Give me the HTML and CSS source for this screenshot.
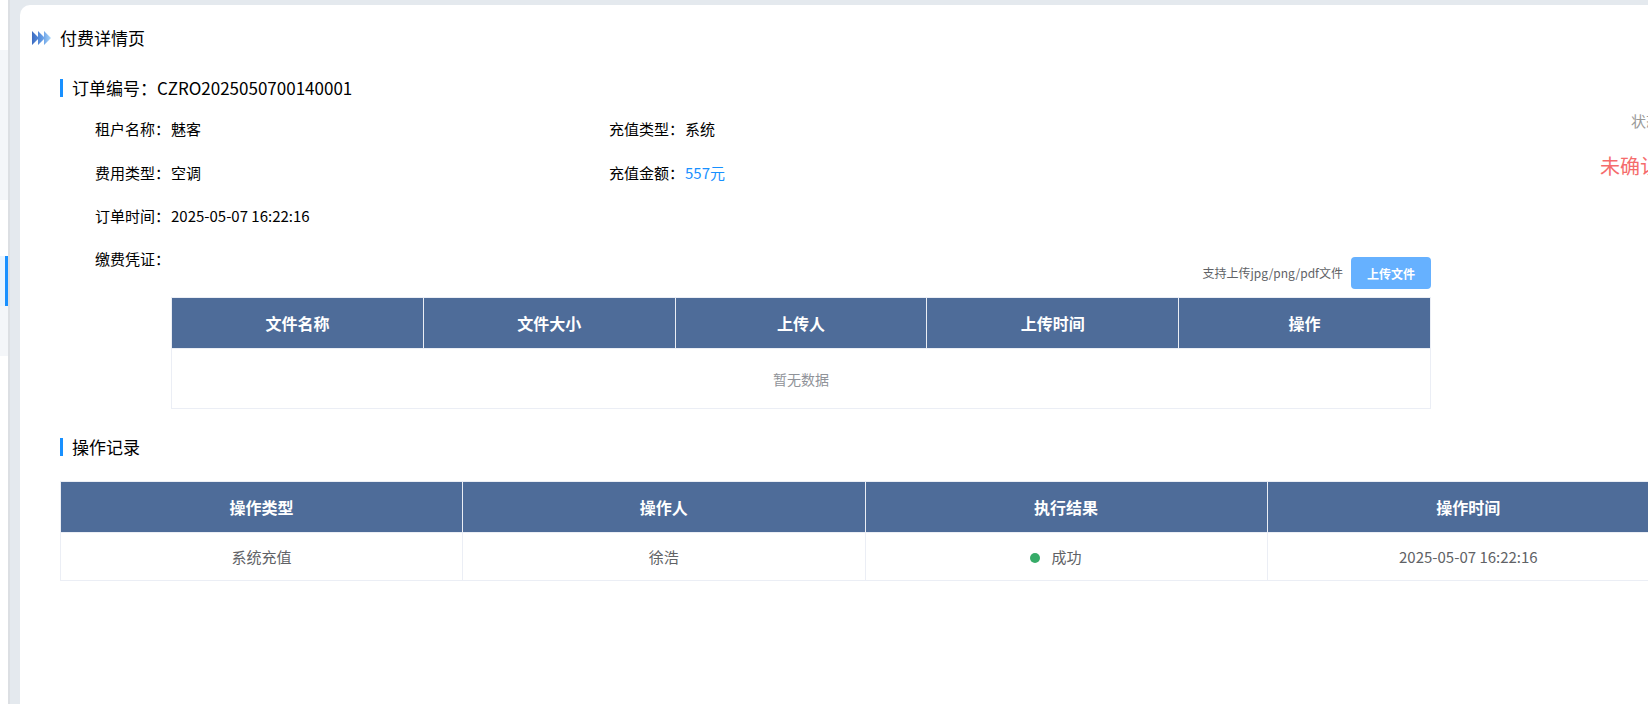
FILE: index.html
```html
<!DOCTYPE html>
<html lang="zh-CN">
<head>
<meta charset="utf-8">
<title>付费详情页</title>
<link rel="stylesheet" href="styles.css">
</head>
<body>
<div class="app">
  <aside class="sidebar">
    <div class="side-a"></div>
    <div class="side-b"></div>
    <div class="side-c"></div>
    <div class="side-active"></div>
    <div class="side-d"></div>
    <div class="side-e"></div>
  </aside>
  <main class="card">
    <header class="page-head">
      <svg class="chev" width="19" height="14" viewBox="0 0 19 14">
        <defs><linearGradient id="g" gradientUnits="userSpaceOnUse" x1="0" x2="19" y1="0" y2="0"><stop offset="0" stop-color="#3c6cc2"/><stop offset="0.5" stop-color="#5f97e2"/><stop offset="1" stop-color="#aad6fa"/></linearGradient></defs>
        <path fill="url(#g)" d="M0 0l7 7-7 7zM6 0l7 7-7 7zM12 0l7 7-7 7z"/>
      </svg>
      <h1 class="page-title">付费详情页</h1>
    </header>
    <section class="detail">
      <div class="detail-main">
        <h2 class="sec-title">订单编号：CZRO2025050700140001</h2>
        <div class="fields">
          <div class="field"><span class="key">租户名称：</span><span>魅客</span></div>
          <div class="field"><span class="key">充值类型：</span><span>系统</span></div>
          <div class="field"><span class="key">费用类型：</span><span>空调</span></div>
          <div class="field"><span class="key">充值金额：</span><span class="money">557元</span></div>
          <div class="field"><span class="key">订单时间：</span><span>2025-05-07 16:22:16</span></div>
        </div>
        <div class="proof">
          <span class="key">缴费凭证：</span>
          <div class="proof-body">
            <div class="upload-row">
              <span class="hint">支持上传jpg/png/pdf文件</span>
              <button class="upload">上传文件</button>
            </div>
            <table class="grid">
              <thead><tr><th>文件名称</th><th>文件大小</th><th>上传人</th><th>上传时间</th><th>操作</th></tr></thead>
              <tbody><tr><td colspan="5" class="empty">暂无数据</td></tr></tbody>
            </table>
          </div>
        </div>
      </div>
      <div class="status">
        <div class="status-label">状态</div>
        <div class="status-value">未确认</div>
      </div>
    </section>
    <section class="records">
      <h2 class="sec-title">操作记录</h2>
      <table class="grid log">
        <thead><tr><th>操作类型</th><th>操作人</th><th>执行结果</th><th>操作时间</th></tr></thead>
        <tbody><tr><td>系统充值</td><td>徐浩</td><td><span class="result"><i class="dot"></i>成功</span></td><td>2025-05-07 16:22:16</td></tr></tbody>
      </table>
    </section>
  </main>
</div>
</body>
</html>
```
FILE: styles.css
```css
* { box-sizing: border-box; }
html, body { margin: 0; height: 100%; overflow: hidden; }
body { background: #e4e9ee; font-family: "Noto Sans CJK SC", "Noto Sans", sans-serif; color: #000; }
.app { display: flex; width: 1648px; height: 704px; overflow: hidden; }
.sidebar { width: 10px; flex: none; background: #fff; border-right: 2px solid #dcdfe3; display: flex; flex-direction: column; }
.side-a { height: 50px; background: #fff; }
.side-b { height: 150px; background: #f4f6f9; }
.side-c { height: 56px; background: #fff; }
.side-active { height: 50px; background: #e8f4ff; border-right: 3px solid #1890ff; }
.side-d { height: 50px; background: #f4f6f9; }
.side-e { flex: 1; background: #fff; }
.card { flex: none; width: 1700px; height: 699px; margin: 5px 0 0 10px; background: #fff; border-radius: 10px 0 0 0; padding: 23px 0 0 12px; }
.page-head { display: flex; align-items: center; gap: 9px; height: 20px; }
.chev { flex: none; }
.page-title { margin: 0; font-size: 17px; font-weight: 400; line-height: 20px; }
.detail { display: flex; padding: 31px 0 0 28px; }
.detail-main { flex: none; width: 1371px; }
.sec-title { margin: 0; font-size: 17px; font-weight: 400; line-height: 18px; height: 18px; border-left: 3px solid #1890ff; padding-left: 9px; }
.fields { display: grid; grid-template-columns: 514px 1fr; grid-auto-rows: 43.5px; padding: 20px 0 0 35px; font-size: 15px; line-height: 24px; }
.field { display: flex; }
.key { flex: none; width: 76px; }
.money { color: #1890ff; }
.status { flex: none; padding: 30px 0 0 169px; white-space: nowrap; }
.status-label { padding-left: 31px; font-size: 15px; line-height: 24px; color: #999; }
.status-value { margin-top: 19px; font-size: 20px; line-height: 28px; color: #f56c6c; }
.proof { display: flex; margin-top: -0.5px; padding-left: 35px; font-size: 15px; line-height: 24px; }
.proof-body { flex: 1; padding-top: 10px; }
.upload-row { display: flex; justify-content: flex-end; align-items: center; gap: 8px; height: 32px; margin-bottom: 8px; }
.hint { font-size: 12px; color: #606266; }
.upload { width: 80px; height: 32px; border: 0; border-radius: 4px; background: #66b1ff; color: #fff; font: 700 12px "Noto Sans CJK SC", sans-serif; padding: 0; }
.grid { width: 1260px; border-collapse: collapse; table-layout: fixed; }
.grid th { background: #4e6c99; color: #fff; font-size: 16px; font-weight: 700; height: 51px; border: 1px solid #ebeef5; text-align: center; padding: 0; }
.grid td { border: 1px solid #ebeef5; text-align: center; color: #606266; font-size: 15px; padding: 0; }
.grid .empty { height: 60px; color: #909399; font-size: 14px; }
.records { padding: 29px 0 0 28px; }
.grid.log { width: 1610px; margin-top: 25px; }
.log td { height: 48px; }
.result { display: inline-block; margin-right: 21px; }
.dot { display: inline-block; width: 10px; height: 10px; border-radius: 50%; background: #36ab68; margin-right: 12px; }
```
